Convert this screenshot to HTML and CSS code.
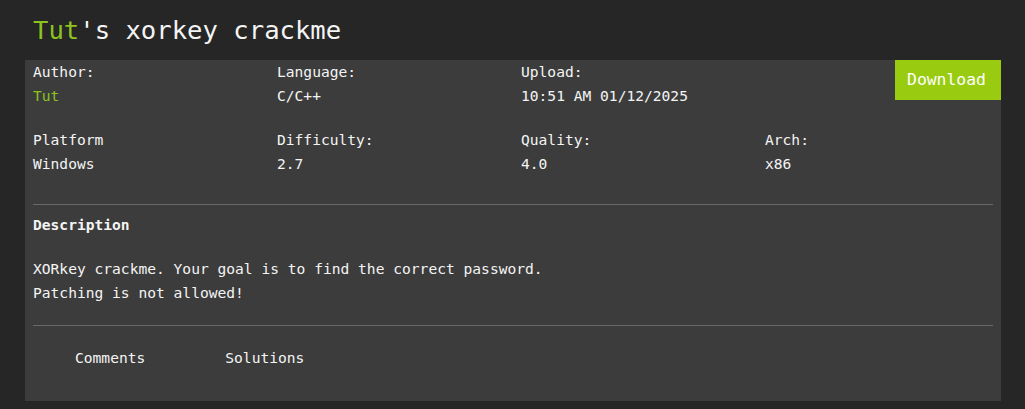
FILE: index.html
```html
<!DOCTYPE html>
<html>
<head>
<meta charset="utf-8">
<link rel="stylesheet" href="styles.css">
</head>
<body>
<div class="page">
  <h1 class="title"><span class="green">Tut</span>'s xorkey crackme</h1>
  <div class="panel">
    <div class="grid first">
      <div class="cell"><div>Author:</div><div class="green">Tut</div></div>
      <div class="cell"><div>Language:</div><div>C/C++</div></div>
      <div class="cell"><div>Upload:</div><div>10:51 AM 01/12/2025</div></div>
      <div class="cell btncell"><a class="download">Download</a></div>
    </div>
    <div class="grid second">
      <div class="cell"><div>Platform</div><div>Windows</div></div>
      <div class="cell"><div>Difficulty:</div><div>2.7</div></div>
      <div class="cell"><div>Quality:</div><div>4.0</div></div>
      <div class="cell"><div>Arch:</div><div>x86</div></div>
    </div>
    <div class="inner">
      <div class="rule rule1"></div>
      <div class="desc-title">Description</div>
      <div class="desc">
        <div>XORkey crackme. Your goal is to find the correct password.</div>
        <div>Patching is not allowed!</div>
      </div>
      <div class="rule rule2"></div>
      <div class="tabs">
        <span class="tab">Comments</span>
        <span class="tab">Solutions</span>
      </div>
    </div>
  </div>
</div>
</body>
</html>
```
FILE: styles.css
```css
html, body {
  margin: 0;
  padding: 0;
  background: #262626;
}
body {
  font-family: "DejaVu Sans Mono", "Liberation Mono", monospace;
  color: #f4f4f4;
  font-size: 14.6px;
  line-height: 24px;
}
.page {
  padding-left: 25px;
  width: 976px;
}
.title {
  margin: 0;
  font-weight: normal;
  font-size: 25.6px;
  line-height: 60px;
  padding-left: 8px;
  color: #f4f4f4;
}
.green {
  color: #8dc21f;
}
.panel {
  background: #3c3c3c;
  width: 976px;
  padding-bottom: 31px;
}
.grid {
  display: grid;
  grid-template-columns: repeat(4, 244px);
}
.cell {
  padding-left: 8px;
}
.second {
  margin-top: 20px;
}
.btncell {
  display: flex;
  justify-content: flex-end;
  align-items: flex-start;
}
.download {
  display: block;
  width: 106px;
  height: 40px;
  line-height: 40px;
  text-align: center;
  background: #99cc11;
  color: #ffffff;
  font-size: 16.4px;
  padding-right: 3px;
  box-sizing: border-box;
}
.inner {
  padding: 0 8px;
}
.rule {
  height: 1px;
  background: #686868;
}
.rule1 {
  margin-top: 28px;
}
.desc-title {
  font-weight: bold;
  margin-top: 8px;
}
.desc {
  margin-top: 20px;
}
.rule2 {
  margin-top: 20px;
}
.tabs {
  margin-top: 20px;
  display: flex;
  padding-left: 2px;
}
.tab {
  padding: 0 40px;
}
```
